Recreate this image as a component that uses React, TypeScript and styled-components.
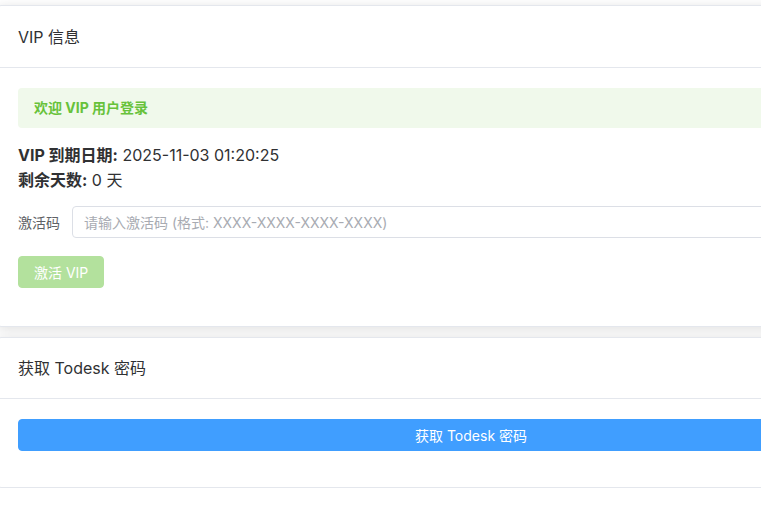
import React from "react";
import styled, { createGlobalStyle } from "styled-components";

const GlobalStyle = createGlobalStyle`
  html, body {
    margin: 0;
    padding: 0;
    background: #ffffff;
    overflow: hidden;
  }
  body {
    font-family: Inter, "Noto Sans CJK SC", sans-serif;
    color: #303133;
  }
  * { box-sizing: border-box; }
`;

const Page = styled.div`
  width: 948px;
  margin-left: -3px;
  padding-top: 5px;
  display: flex;
  flex-direction: column;
  gap: 10px;
`;

const Card = styled.section`
  background: #ffffff;
  border: 1px solid #e4e7ed;
  border-radius: 4px;
  box-shadow: 0 2px 12px rgba(0, 0, 0, 0.13);
  overflow: hidden;
`;

const CardHeader = styled.div<{ $tall?: boolean }>`
  padding: ${(p) => (p.$tall ? 19 : 18)}px 20px 17px;
  border-bottom: 1px solid #e4e7ed;
  font-size: 16px;
  line-height: 25px;
  color: #303133;
`;

const CardBody = styled.div`
  padding: 20px;
  display: flex;
  flex-direction: column;
`;

const Alert = styled.div`
  background: #f0f9eb;
  color: #67c23a;
  border-radius: 4px;
  padding: 8px 16px;
  font-size: 14px;
  font-weight: 700;
  line-height: 24px;
`;

const InfoBlock = styled.div`
  margin: 15px 0 13px;
  font-size: 16px;
  line-height: 25px;
  color: #303133;
`;

const InfoLine = styled.p`
  margin: 0;
  & b {
    font-weight: 700;
  }
`;

const FormItem = styled.div`
  display: flex;
  align-items: center;
  margin-bottom: 18px;
`;

const Label = styled.label`
  width: 54px;
  padding-right: 12px;
  font-size: 14px;
  color: #606266;
  white-space: nowrap;
`;

const Input = styled.input`
  flex: 1;
  height: 32px;
  border: 1px solid #dcdfe6;
  border-radius: 4px;
  padding: 0 11px;
  font-family: inherit;
  font-size: 14px;
  color: #606266;
  outline: none;
  &::placeholder {
    color: #a8abb2;
  }
`;

const Button = styled.button<{ $variant: "success-disabled" | "primary"; $block?: boolean }>`
  height: 32px;
  padding: 0 15px;
  border-radius: 4px;
  border: 1px solid ${(p) => (p.$variant === "primary" ? "#409eff" : "#b3e19d")};
  background: ${(p) => (p.$variant === "primary" ? "#409eff" : "#b3e19d")};
  color: #ffffff;
  font-family: inherit;
  font-size: 14px;
  cursor: ${(p) => (p.$variant === "primary" ? "pointer" : "not-allowed")};
  align-self: ${(p) => (p.$block ? "stretch" : "flex-start")};
  margin-bottom: ${(p) => (p.$block ? 16 : 18)}px;
`;

export default function App() {
  return (
    <>
      <GlobalStyle />
      <Page>
        <Card>
          <CardHeader $tall>VIP 信息</CardHeader>
          <CardBody>
            <Alert>欢迎 VIP 用户登录</Alert>
            <InfoBlock>
              <InfoLine>
                <b>VIP 到期日期:</b> 2025-11-03 01:20:25
              </InfoLine>
              <InfoLine>
                <b>剩余天数:</b> 0 天
              </InfoLine>
            </InfoBlock>
            <FormItem>
              <Label>激活码</Label>
              <Input placeholder="请输入激活码 (格式: XXXX-XXXX-XXXX-XXXX)" />
            </FormItem>
            <Button $variant="success-disabled" disabled>
              激活 VIP
            </Button>
          </CardBody>
        </Card>
        <Card>
          <CardHeader>获取 Todesk 密码</CardHeader>
          <CardBody>
            <Button $variant="primary" $block>
              获取 Todesk 密码
            </Button>
          </CardBody>
        </Card>
      </Page>
    </>
  );
}
